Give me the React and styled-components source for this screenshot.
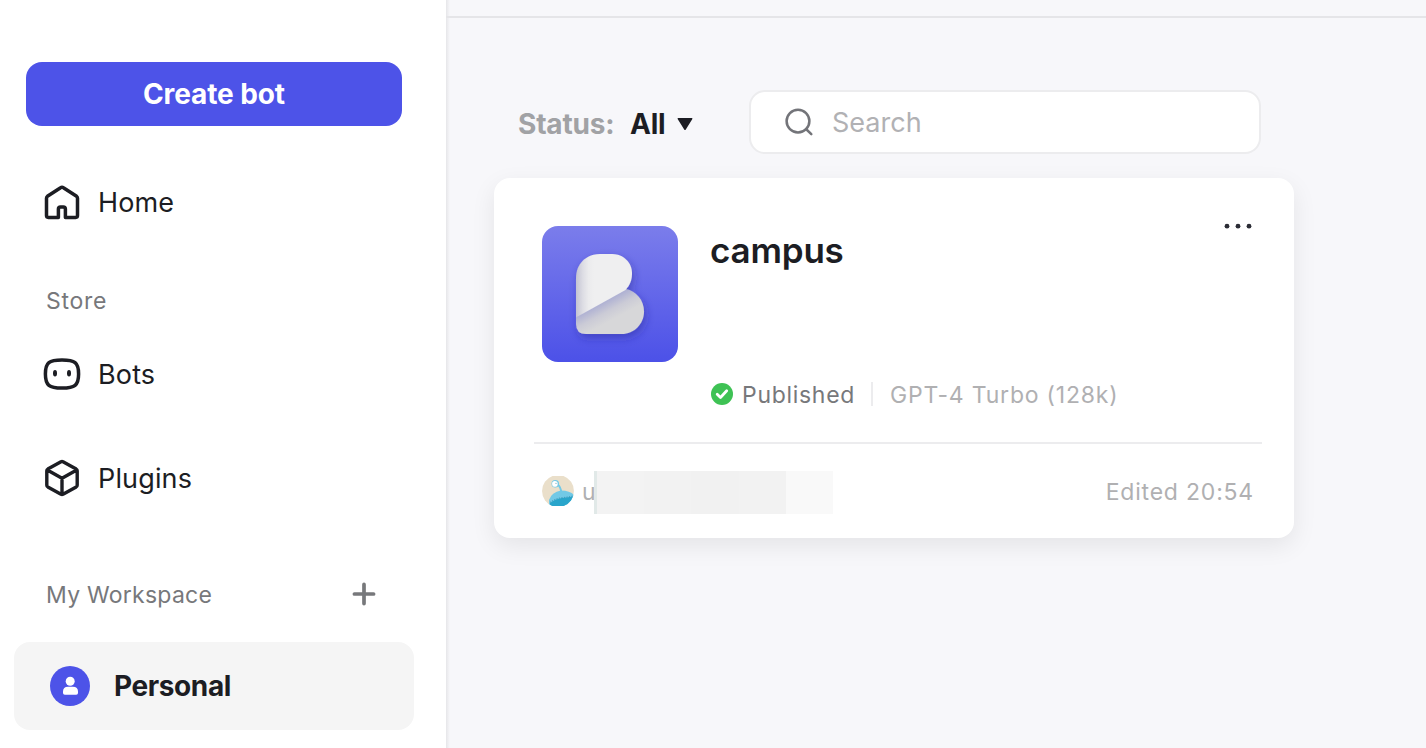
import React from 'react';
import styled, { createGlobalStyle } from 'styled-components';

const GlobalStyle = createGlobalStyle`
  *, *::before, *::after { box-sizing: border-box; }
  body { margin: 0; overflow: hidden; background: #f7f7fa; }
  button, input { font: inherit; letter-spacing: inherit; }
`;

const Page = styled.div`
  display: flex;
  width: 100%;
  height: 100vh;
  color: #1c1d23;
  font-family: Inter, 'Liberation Sans', sans-serif;
  font-size: 27px;
  line-height: 40px;
  letter-spacing: 0.15px;
  white-space: nowrap;
`;

const Sidebar = styled.aside`
  display: flex;
  flex-direction: column;
  flex: none;
  width: 446px;
  padding: 62px 32px 0 14px;
  background: #fff;
`;

const CreateButton = styled.button`
  height: 64px;
  margin: 0 12px 32px;
  padding: 0;
  border: 0;
  border-radius: 16px;
  background: #4d53e8;
  color: #fff;
  font-size: 28px;
  font-weight: 700;
  letter-spacing: -0.1px;
`;

const NavItem = styled.a`
  display: flex;
  align-items: center;
  gap: 16px;
  height: 88px;
  padding-left: 28px;
`;

const NavLabel = styled.span`
  padding-top: 2px;
`;

const NavList = styled.nav`
  display: flex;
  flex-direction: column;
  gap: 16px;
`;

const SectionHeading = styled.div`
  display: flex;
  align-items: center;
  justify-content: space-between;
  height: 32px;
  margin: ${({ $margin }) => $margin};
  padding: 0 38px 0 32px;
  color: #77787b;
  font-size: 23px;
  letter-spacing: ${({ $spacing }) => $spacing};
`;

const WorkspaceItem = styled.a`
  display: flex;
  align-items: center;
  gap: 24px;
  width: 400px;
  height: 88px;
  padding-left: 36px;
  border-radius: 16px;
  background: #f5f5f5;
  font-size: 28px;
  font-weight: 700;
  letter-spacing: -0.4px;
`;

const Main = styled.main`
  display: flex;
  flex-direction: column;
  flex: 1;
  min-width: 0;
  background: linear-gradient(to right, #e6e6e9, #f7f7fa 4px);
`;

const TopBar = styled.header`
  height: 18px;
  border-bottom: 2px solid #e5e5e8;
`;

const FilterBar = styled.div`
  display: flex;
  align-items: center;
  height: 64px;
  margin: 72px 0 24px 72px;
`;

const StatusFilter = styled.div`
  display: flex;
  align-items: center;
  width: 231px;
  padding-top: 3px;
  font-size: 28px;
  font-weight: 700;
  letter-spacing: -0.2px;
`;

const StatusLabel = styled.span`
  width: 112px;
  color: #a1a2a5;
`;

const StatusValue = styled.span`
  width: 47px;
`;

const SearchField = styled.label`
  display: flex;
  align-items: center;
  gap: 18px;
  width: 512px;
  height: 64px;
  padding-left: 34px;
  border: 2px solid #ececee;
  border-radius: 16px;
  background: #fff;
`;

const SearchInput = styled.input`
  flex: 1;
  min-width: 0;
  padding: 2px 0 0;
  border: 0;
  outline: 0;
  background: transparent;
  letter-spacing: 0;
  &::placeholder { color: #b1b1b4; opacity: 1; }
`;

const Card = styled.article`
  display: flex;
  flex-direction: column;
  width: 800px;
  height: 360px;
  margin-left: 48px;
  padding: 48px 32px 0 40px;
  border-radius: 16px;
  background: #fff;
  box-shadow: 0 8px 24px rgba(0, 0, 0, 0.08);
`;

const CardTop = styled.div`
  display: flex;
  flex: none;
  height: 216px;
  padding-left: 8px;
`;

const CardInfo = styled.div`
  display: flex;
  flex-direction: column;
  justify-content: space-between;
  flex: 1;
  height: 184px;
  margin-left: 32px;
`;

const BotName = styled.h2`
  margin: 0;
  font-size: 35px;
  font-weight: 600;
  line-height: 48px;
  letter-spacing: -0.2px;
`;

const MetaRow = styled.div`
  display: flex;
  align-items: center;
  height: 32px;
  font-size: 23px;
  line-height: 32px;
  letter-spacing: 0.7px;
`;

const Published = styled.span`
  width: 129px;
  margin-left: 8px;
  padding-top: 2px;
  color: #77787b;
`;

const Model = styled.span`
  margin-left: 17px;
  padding-top: 2px;
  color: #b0b0b2;
  letter-spacing: 0.8px;
`;

const Divider = styled.span`
  width: 2px;
  height: 24px;
  background: #ececee;
`;

const CardFooter = styled.footer`
  display: flex;
  align-items: center;
  flex: none;
  height: 96px;
  padding: 0 8px;
  border-top: 2px solid #ececee;
  color: #b0b0b2;
  font-size: 23px;
  letter-spacing: 0.8px;
`;

const Owner = styled.span`
  width: 12px;
  margin-left: 8px;
  padding-top: 2px;
  letter-spacing: 0;
`;

const Redaction = styled.div`
  display: flex;
  z-index: 1;
  width: 239px;
  height: 43px;
  margin-top: 3px;
  border-left: 3px solid #e1e9e8;
`;

const RedactionBlock = styled.span`
  flex: 0 0 ${({ $width }) => $width}px;
  background: ${({ $color }) => $color};
`;

const Edited = styled.time`
  margin-left: auto;
  padding-top: 2px;
`;

const Icon = styled.svg`
  display: block;
  flex: none;
  overflow: visible;
`;

const HomeIcon = () => (
  <Icon width="40" height="40" viewBox="0 0 40 40" fill="none" stroke="#1c1d23" strokeWidth="3.5" strokeLinejoin="round">
    <path d="M18.6 5.7 5.4 14.3Q4.5 15 4.5 16.3V33.6Q4.5 35.4 6.3 35.4H16.4V27Q16.4 24.9 18.5 24.9H21.3Q23.4 24.9 23.4 27V35.4H33.7Q35.5 35.4 35.5 33.6V16.3Q35.5 15 34.6 14.3L21.4 5.7Q20 4.7 18.6 5.7Z" />
  </Icon>
);

const BotIcon = () => (
  <Icon width="40" height="40" viewBox="0 0 40 40">
    <path d="M20 6C32.8 6 36.6 8.5 36.6 20S32.8 34 20 34 3.4 31.5 3.4 20 7.2 6 20 6Z" fill="none" stroke="#1c1d23" strokeWidth="3.5" />
    <g fill="#1c1d23"><ellipse cx="13" cy="19.3" rx="2" ry="3.3" /><ellipse cx="27" cy="19.3" rx="2" ry="3.3" /></g>
  </Icon>
);

const PluginIcon = () => (
  <Icon width="40" height="40" viewBox="0 0 40 40" fill="none" stroke="#1c1d23" strokeWidth="3.4" strokeLinejoin="round">
    <path d="M19 3.7Q20 3.2 21 3.7L34.2 11.1Q35.2 11.7 35.2 12.8V27.3Q35.2 28.3 34.2 28.9L21 36.3Q20 36.8 19 36.3L5.8 28.9Q4.8 28.3 4.8 27.3V12.8Q4.8 11.7 5.8 11.1ZM5.3 11.9 20 20.2 34.7 11.9M20 20.2V36" />
  </Icon>
);

const PlusIcon = () => (
  <Icon width="24" height="24" viewBox="0 0 24 24" fill="none" stroke="#77787b" strokeWidth="3.7" strokeLinecap="round">
    <path d="M12 1.4V20.6M2.4 11H21.6" />
  </Icon>
);

const PersonIcon = () => (
  <Icon width="40" height="40" viewBox="0 0 40 40">
    <circle cx="20" cy="20" r="20" fill="#4d53e8" />
    <circle cx="20.2" cy="15.3" r="4.5" fill="#fff" />
    <path d="M13 27V25.6Q13 20.7 18 20.7H22.9Q28 20.7 28 25.6V27Q28 28.8 26.2 28.8H14.8Q13 28.8 13 27Z" fill="#fff" />
  </Icon>
);

const CaretIcon = () => (
  <Icon width="16" height="12" viewBox="0 0 16 12">
    <path d="M1.3 0H14.7Q16 0 15.2 1.2L8.8 11.4Q8 12.4 7.2 11.4L.8 1.2Q0 0 1.3 0Z" fill="#1c1d23" />
  </Icon>
);

const SearchIcon = () => (
  <Icon width="29" height="28" viewBox="0 0 29 28" fill="none" stroke="#737479" strokeWidth="2.5" strokeLinecap="round">
    <circle cx="13" cy="13.1" r="11.4" />
    <path d="M21 21 26.3 26.2" />
  </Icon>
);

const BotLogo = () => (
  <Icon width="136" height="136" viewBox="0 0 136 136">
    <defs>
      <linearGradient id="tile" x1="0" y1="0" x2="0" y2="1">
        <stop stopColor="#7b7deb" /><stop offset="1" stopColor="#4c51e8" />
      </linearGradient>
      <linearGradient id="fold" x1="34" y1="0" x2="52" y2="0" gradientUnits="userSpaceOnUse">
        <stop stopColor="#c3c3d2" /><stop offset=".38" stopColor="#dddde4" /><stop offset=".7" stopColor="#ebebed" /><stop offset="1" stopColor="#efeff0" />
      </linearGradient>
      <linearGradient id="lower" x1="61" y1="77" x2="70" y2="94" gradientUnits="userSpaceOnUse">
        <stop stopColor="#b0b2d3" /><stop offset=".5" stopColor="#cbcbd6" /><stop offset="1" stopColor="#d7d7d9" />
      </linearGradient>
      <filter id="logoShadow" x="-30%" y="-30%" width="160%" height="170%">
        <feDropShadow dx="2" dy="4" stdDeviation="4" floodColor="#25258c" floodOpacity=".4" />
      </filter>
    </defs>
    <rect width="136" height="136" rx="16" fill="url(#tile)" />
    <g filter="url(#logoShadow)">
      <path d="M34 91 84 63C94 65 102 74 102 85.5C102 98 92 108 79.5 108H44Q34 108 34 98Z" fill="url(#lower)" />
      <path d="M34 91.5V52C34 38 44 28 58 28H70C81.5 28 90 36.5 90 47.5C90 54 88 59 83.5 64Z" fill="url(#fold)" />
    </g>
  </Icon>
);

const CheckIcon = () => (
  <Icon width="24" height="24" viewBox="0 0 24 24">
    <circle cx="12" cy="12" r="11" fill="#3ec254" />
    <path d="m7.2 12.2 3.3 3.3 6.2-6.7" fill="none" stroke="#fff" strokeWidth="2.8" strokeLinecap="round" strokeLinejoin="round" />
  </Icon>
);

const OwnerAvatar = () => (
  <Icon width="32" height="32" viewBox="0 0 32 32">
    <defs><clipPath id="avatarClip"><path d="M10.5 1H21.5A16 16 0 0 1 21.5 31H10.5A16 16 0 0 1 10.5 1Z" /></clipPath></defs>
    <g clipPath="url(#avatarClip)">
      <rect width="32" height="32" fill="#eadfca" />
      <path d="M15.5 9.5Q19 12 19.3 18" fill="none" stroke="#72c9e6" strokeWidth="2" />
      <path d="M7 32V25Q9.5 17 19 15.5Q28 15.5 32 20V32Z" fill="#72c9e6" />
      <path d="M8 32V28Q13 24 20 23T31 21.500V32Z" fill="#29a5cb" />
      <path d="M8 27.5Q13 23.5 20 22.7T31 21" fill="none" stroke="#3a8fae" strokeDasharray="1 1.5" />
      <circle cx="13.3" cy="8.8" r="3.8" fill="#72c9e6" /><circle cx="12.9" cy="8.9" r="2.8" fill="#fff" />
      <circle cx="14" cy="8.2" r=".5" fill="#39839a" />
    </g>
  </Icon>
);

const MoreIcon = () => (
  <Icon width="28" height="6" viewBox="0 0 28 6" fill="#2b2c35">
    <circle cx="3" cy="3.2" r="2.4" /><circle cx="14" cy="3.2" r="2.4" /><circle cx="25" cy="3.2" r="2.4" />
  </Icon>
);

const MoreButton = styled.button`
  align-self: flex-start;
  width: 28px;
  height: 6px;
  margin: -3px 10px 0 0;
  padding: 0;
  border: 0;
  background: none;
`;

export default function App() {
  return (
    <>
      <GlobalStyle />
      <Page>
        <Sidebar>
          <CreateButton>Create bot</CreateButton>
          <NavItem><HomeIcon /><NavLabel>Home</NavLabel></NavItem>
          <SectionHeading $margin="39px 0 13px" $spacing="0.7px">Store</SectionHeading>
          <NavList>
            <NavItem><BotIcon /><NavLabel>Bots</NavLabel></NavItem>
            <NavItem><PluginIcon /><NavLabel>Plugins</NavLabel></NavItem>
          </NavList>
          <SectionHeading $margin="57px 0 31px" $spacing="0.25px">My Workspace<PlusIcon /></SectionHeading>
          <WorkspaceItem><PersonIcon />Personal</WorkspaceItem>
        </Sidebar>
        <Main>
          <TopBar />
          <FilterBar>
            <StatusFilter>
              <StatusLabel>Status:</StatusLabel>
              <StatusValue>All</StatusValue>
              <CaretIcon />
            </StatusFilter>
            <SearchField><SearchIcon /><SearchInput placeholder="Search" /></SearchField>
          </FilterBar>
          <Card>
            <CardTop>
              <BotLogo />
              <CardInfo>
                <BotName>campus</BotName>
                <MetaRow><CheckIcon /><Published>Published</Published><Divider /><Model>GPT-4 Turbo (128k)</Model></MetaRow>
              </CardInfo>
              <MoreButton aria-label="More"><MoreIcon /></MoreButton>
            </CardTop>
            <CardFooter>
              <OwnerAvatar />
              <Owner>u</Owner>
              <Redaction>
                <RedactionBlock $width={47} $color="#f3f3f3" />
                <RedactionBlock $width={47} $color="#f2f2f2" />
                <RedactionBlock $width={48} $color="#f1f1f1" />
                <RedactionBlock $width={47} $color="#f2f2f2" />
                <RedactionBlock $width={47} $color="#f9f9f9" />
              </Redaction>
              <Edited>Edited 20:54</Edited>
            </CardFooter>
          </Card>
        </Main>
      </Page>
    </>
  );
}
